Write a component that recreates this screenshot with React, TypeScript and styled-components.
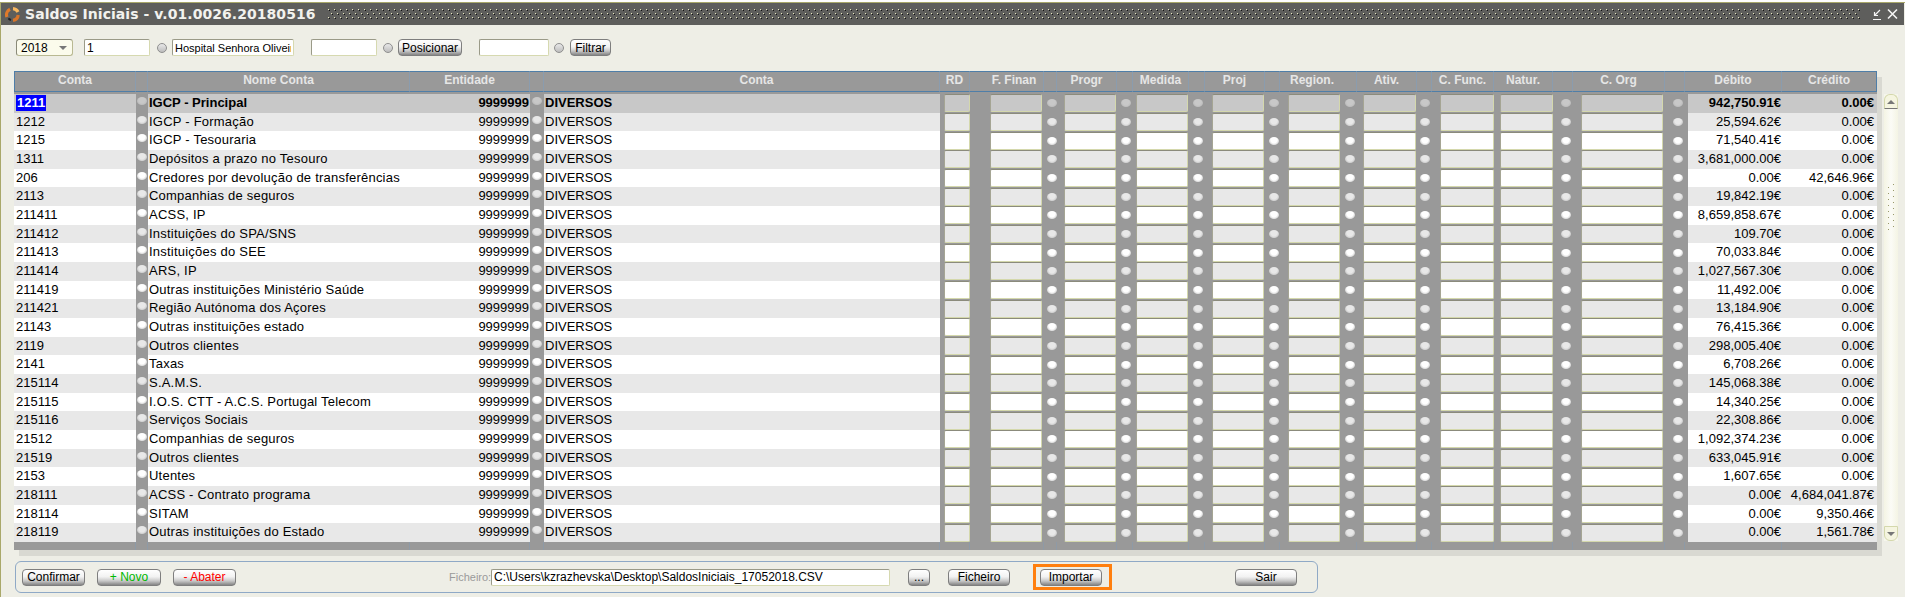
import React from 'react';
import styled, { createGlobalStyle } from 'styled-components';

const GlobalStyle = createGlobalStyle`
  html, body {
    margin: 0;
    padding: 0;
    background: #fff;
    overflow: hidden;
  }
  * {
    box-sizing: border-box;
  }
`;

const rows = [
  ['1211', 'IGCP - Principal', '942,750.91€', '0.00€'],
  ['1212', 'IGCP - Formação', '25,594.62€', '0.00€'],
  ['1215', 'IGCP - Tesouraria', '71,540.41€', '0.00€'],
  ['1311', 'Depósitos a prazo no Tesouro', '3,681,000.00€', '0.00€'],
  ['206', 'Credores por devolução de transferências', '0.00€', '42,646.96€'],
  ['2113', 'Companhias de seguros', '19,842.19€', '0.00€'],
  ['211411', 'ACSS, IP', '8,659,858.67€', '0.00€'],
  ['211412', 'Instituições do SPA/SNS', '109.70€', '0.00€'],
  ['211413', 'Instituições do SEE', '70,033.84€', '0.00€'],
  ['211414', 'ARS, IP', '1,027,567.30€', '0.00€'],
  ['211419', 'Outras instituições Ministério Saúde', '11,492.00€', '0.00€'],
  ['211421', 'Região Autónoma dos Açores', '13,184.90€', '0.00€'],
  ['21143', 'Outras instituições estado', '76,415.36€', '0.00€'],
  ['2119', 'Outros clientes', '298,005.40€', '0.00€'],
  ['2141', 'Taxas', '6,708.26€', '0.00€'],
  ['215114', 'S.A.M.S.', '145,068.38€', '0.00€'],
  ['215115', 'I.O.S. CTT - A.C.S. Portugal Telecom', '14,340.25€', '0.00€'],
  ['215116', 'Serviços Sociais', '22,308.86€', '0.00€'],
  ['21512', 'Companhias de seguros', '1,092,374.23€', '0.00€'],
  ['21519', 'Outros clientes', '633,045.91€', '0.00€'],
  ['2153', 'Utentes', '1,607.65€', '0.00€'],
  ['218111', 'ACSS - Contrato programa', '0.00€', '4,684,041.87€'],
  ['218114', 'SITAM', '0.00€', '9,350.46€'],
  ['218119', 'Outras instituições do Estado', '0.00€', '1,561.78€'],
];

// label, width, extra padding left / right to push the label over its input
const columns: [string, number, number?, number?][] = [
  ['Conta', 122],
  ['', 12],
  ['Nome Conta', 262],
  ['Entidade', 120],
  ['', 14],
  ['Conta', 396, 30],
  ['RD', 30],
  ['F. Finan', 74, 15],
  ['', 13],
  ['Progr', 60],
  ['', 16],
  ['Medida', 56],
  ['', 16],
  ['Proj', 60],
  ['', 15],
  ['Region.', 77, 0, 12],
  ['Ativ.', 60],
  ['', 15],
  ['C. Func.', 62],
  ['Natur.', 59],
  ['', 20],
  ['C. Org', 92],
  ['', 20],
  ['Débito', 97],
  ['Crédito', 95],
];

const headerTracks = columns.map((c) => `${c[1]}px`).join(' ');

// gap before the input, input width, gap before its dot
const fields: [number, number, number?][] = [
  [4, 26],
  [20, 52, 5],
  [7, 52, 5],
  [5, 52, 5],
  [9, 52, 5],
  [9, 52, 5],
  [8, 53, 4],
  [10, 54],
  [6, 53, 8],
  [10, 82, 10],
];

const tones = { selected: '#c8c8c8', alt: '#e8e8e8', plain: '#ffffff' };

const Window = styled.div`
  width: 1905px;
  height: 595px;
  margin-top: 2px;
  background: #eeeee6;
  border-top: 1px solid #a9a86a;
  border-left: 1px solid #a9a86a;
  font-family: 'Liberation Sans', Arial, sans-serif;
  font-size: 12px;
  color: #000;
`;

const TitleBar = styled.div`
  height: 22px;
  width: 1903px;
  background: #5e5e5c;
  display: flex;
  align-items: center;
  padding-left: 4px;
`;

const Title = styled.div`
  font-family: 'DejaVu Sans', Verdana, sans-serif;
  font-weight: bold;
  font-size: 14px;
  letter-spacing: 0.05px;
  color: #f2f2ee;
  margin-left: 5px;
  white-space: nowrap;
`;

const Grip = styled.svg`
  flex: 1;
  height: 12px;
  margin: 0 11px;
  display: block;
`;

const WindowIcons = styled.svg`
  display: block;
  margin-right: 3px;
`;

const Main = styled.div`
  padding-left: 13px;
`;

const Toolbar = styled.div`
  display: flex;
  align-items: center;
  height: 17px;
  margin-top: 14px;
`;

const SelectBox = styled.div<{ $left?: number; $width: number }>`
  width: ${(p) => p.$width}px;
  height: 17px;
  margin-left: ${(p) => p.$left || 0}px;
  padding-left: 4px;
  display: flex;
  align-items: center;
  justify-content: space-between;
  background: #fbfbec;
  border: 1px solid #b9b992;
  border-top-color: #8a8a78;
  border-left-color: #8a8a78;
  border-radius: 3px;
  font-size: 12px;

  &::after {
    content: '';
    margin-right: 5px;
    border-left: 4px solid transparent;
    border-right: 4px solid transparent;
    border-top: 4px solid #777;
  }
`;

const TextBox = styled.input<{ $left?: number; $width: number; $small?: boolean }>`
  width: ${(p) => p.$width}px;
  height: 17px;
  margin-left: ${(p) => p.$left || 0}px;
  padding: 0 2px;
  background: #fff;
  border: 1px solid #d6d9b0;
  border-top-color: #9a9a88;
  border-left-color: #9a9a88;
  border-radius: 2px;
  font-family: inherit;
  font-size: ${(p) => (p.$small ? 11 : 12)}px;
  color: #000;
  outline: none;
`;

const Radio = styled.span<{ $left?: number }>`
  display: block;
  width: 10px;
  height: 10px;
  margin-left: ${(p) => p.$left || 0}px;
  border-radius: 50%;
  border: 1px solid #8e8e8e;
  background: linear-gradient(#e8e8e8, #bdbdbd);
`;

const Button = styled.button<{ $left?: number; $width: number; $color?: string }>`
  width: ${(p) => p.$width}px;
  height: 17px;
  margin-left: ${(p) => p.$left || 0}px;
  padding: 0;
  background: linear-gradient(#ffffff 0%, #f2f2f2 45%, #c9c9c9 72%, #858585 100%);
  border: 1px solid #7e7e7e;
  border-radius: 4px;
  font-family: inherit;
  font-size: 12px;
  line-height: 14px;
  color: ${(p) => p.$color || '#000'};
`;

const TableArea = styled.div`
  display: flex;
  margin-top: 15px;
`;

const Table = styled.div`
  width: 1863px;
  background: #999;
  box-shadow: 5px 6px 0 #d9d9d2;
`;

const HeaderRow = styled.div`
  display: grid;
  grid-template-columns: ${headerTracks};
  height: 23px;
  border-bottom: 2px solid #999;
`;

const HeaderCell = styled.div<{ $left?: number; $right?: number }>`
  height: 21px;
  line-height: 17px;
  padding-left: ${(p) => p.$left || 0}px;
  padding-right: ${(p) => p.$right || 0}px;
  text-align: center;
  font-weight: bold;
  font-size: 12px;
  color: #e6e6e6;
  border-top: 1px solid #4f7ea8;
  border-bottom: 1px solid #4f7ea8;
  border-right: 1px solid #8a9cae;

  &:first-child {
    border-left: 1px solid #4f7ea8;
  }

  &:last-child {
    border-right: 1px solid #4f7ea8;
  }
`;

const FooterRow = styled.div`
  display: grid;
  grid-template-columns: ${headerTracks};
  height: 8px;
`;

const FooterCell = styled.div`
  border-right: 1px solid #8e9aa6;

  &:last-child {
    border-right: none;
  }
`;

const Body = styled.div`
  height: 448px;
  display: grid;
  grid-template-rows: repeat(24, 1fr);
`;

const Row = styled.div<{ $tone: string; $bold: boolean }>`
  display: grid;
  grid-template-columns: 122px 12px 262px 120px 14px 396px 748px 94px 93px;
  min-height: 0;
  background: ${(p) => p.$tone};
  font-weight: ${(p) => (p.$bold ? 'bold' : 'normal')};
  font-size: 13px;
  line-height: 18px;
  white-space: nowrap;
`;

const Cell = styled.div<{ $align?: string }>`
  text-align: ${(p) => p.$align || 'left'};
  padding: 0 1px;
  overflow: hidden;
`;

const CodeCell = styled(Cell)`
  padding-left: 2px;
`;

const NameCell = styled(Cell)<{ $bold: boolean }>`
  letter-spacing: ${(p) => (p.$bold ? 0 : 0.22)}px;
`;

const Selected = styled.span`
  display: inline-block;
  background: #0000ff;
  color: #fff;
  padding: 0 1px;
  line-height: 16px;
`;

const DotCell = styled.div`
  background: #999;
  display: flex;
  justify-content: center;
  padding-top: 3px;
`;

const Dot = styled.span<{ $tone: string; $left?: number }>`
  display: block;
  flex: none;
  width: 10px;
  height: 8px;
  margin-left: ${(p) => p.$left || 0}px;
  border-radius: 50%;
  background: radial-gradient(ellipse at 50% 30%, ${(p) => p.$tone} 45%, #b2b2b2 100%);
`;

const FieldsCell = styled.div`
  background: #999;
  display: flex;
  align-items: center;
`;

const FieldBox = styled.div<{ $tone: string; $left: number; $width: number }>`
  flex: none;
  height: 18px;
  width: ${(p) => p.$width}px;
  margin-left: ${(p) => p.$left}px;
  background: ${(p) => p.$tone};
  border: 1px solid #d4d8ac;
  border-top-color: #8b8b7c;
  border-left-color: #a5a594;
  border-radius: 2px;
`;

const ScrollBar = styled.div`
  width: 14px;
  height: 447px;
  margin-top: 23px;
  margin-left: 7px;
  display: flex;
  flex-direction: column;
  background: #f6f6ec;
`;

const ScrollButton = styled.div<{ $down?: boolean }>`
  height: 15px;
  display: flex;
  align-items: center;
  justify-content: center;
  background: #f5f5e0;
  border: 1px solid #d4d8ac;
  border-radius: ${(p) => (p.$down ? '0 0 6px 6px' : '6px 6px 0 0')};
  ${(p) => (p.$down ? '' : 'border-bottom: 1px solid #777;')}

  &::after {
    content: '';
    border-left: 4px solid transparent;
    border-right: 4px solid transparent;
    ${(p) => (p.$down ? 'border-top: 4px solid #777;' : 'border-bottom: 4px solid #777;')}
  }
`;

const ScrollTrack = styled.div`
  flex: 1;
  display: flex;
  justify-content: center;
  padding-top: 75px;
  background: linear-gradient(90deg, #f4f4e4, #fbfbf6 50%, #f4f4e4);
`;

const Panel = styled.div`
  width: 1303px;
  height: 32px;
  margin-top: 11px;
  margin-left: 1px;
  padding-left: 6px;
  display: flex;
  align-items: center;
  border: 1px solid #8fa9c6;
  border-radius: 6px;
`;

const FileLabel = styled.span`
  width: 39px;
  margin-left: 213px;
  margin-right: 3px;
  color: #9a9a9a;
  font-size: 11px;
  white-space: nowrap;
`;

const Highlight = styled.div`
  margin-left: 23px;
  height: 26px;
  padding: 0 7px 0 4px;
  display: flex;
  align-items: center;
  border: 3px solid #ff7f0e;
`;

const Logo = () => (
  <svg width="15" height="15" viewBox="0 0 15 15" fill="none">
    <path d="M2 10 A6 6 0 0 1 5 2.3" stroke="#e07a2a" strokeWidth="3.2" />
    <path d="M8 1.6 A6 6 0 0 1 13 5" stroke="#f8b860" strokeWidth="3.2" />
    <path d="M13.2 8 A6 6 0 0 1 8 13.3" stroke="#d8752a" strokeWidth="3.2" />
    <path d="M3.4 11.4 A6 6 0 0 0 6 13" stroke="#222" strokeWidth="2" />
  </svg>
);

const TitleGrip = () => (
  <Grip>
    <defs>
      <pattern id="title-grip" width="6" height="8" patternUnits="userSpaceOnUse">
        <rect x="1" y="1" width="1" height="1" fill="#e8e8c0" />
        <rect x="2" y="2" width="1" height="1" fill="#111" />
        <rect x="4" y="5" width="1" height="1" fill="#e8e8c0" />
        <rect x="5" y="6" width="1" height="1" fill="#111" />
      </pattern>
    </defs>
    <rect width="100%" height="100%" fill="url(#title-grip)" />
  </Grip>
);

const ScrollGrip = () => (
  <svg width="8" height="50" viewBox="0 0 8 50">
    {[0, 1, 2, 3, 4, 5, 6, 7].flatMap((i) => [
      <rect key={`a${i}`} x="1" y={i * 6 + 3} width="1" height="1" fill="#99996a" />,
      <rect key={`b${i}`} x="6" y={i * 6} width="1" height="1" fill="#99996a" />,
    ])}
  </svg>
);

export default function App() {
  return (
    <Window>
      <GlobalStyle />
      <TitleBar>
        <Logo />
        <Title>Saldos Iniciais - v.01.0026.20180516</Title>
        <TitleGrip />
        <WindowIcons width="30" height="14" viewBox="0 0 30 14" fill="none" stroke="#f4f4f4">
          <path d="M2 12.5 H10 M9 3 L3.5 8.5 M3.5 5 V8.5 H7" strokeWidth="1.2" />
          <path d="M17 2.5 L26 11.5 M26 2.5 L17 11.5" strokeWidth="1.6" />
        </WindowIcons>
      </TitleBar>
      <Main>
        <Toolbar>
          <SelectBox $left={2} $width={57}>2018</SelectBox>
          <TextBox $left={11} $width={66} value="1" readOnly />
          <Radio $left={7} />
          <TextBox $left={5} $width={122} $small value="Hospital Senhora Oliveira" readOnly />
          <TextBox $left={17} $width={66} value="" readOnly />
          <Radio $left={6} />
          <Button $left={5} $width={64}>Posicionar</Button>
          <TextBox $left={17} $width={70} value="" readOnly />
          <Radio $left={5} />
          <Button $left={6} $width={41}>Filtrar</Button>
        </Toolbar>
        <TableArea>
          <Table>
            <HeaderRow>
              {columns.map(([label, , left, right], i) => (
                <HeaderCell key={i} $left={left} $right={right}>{label}</HeaderCell>
              ))}
            </HeaderRow>
            <Body>
              {rows.map(([code, name, debit, credit], i) => {
                const tone = i === 0 ? tones.selected : i % 2 ? tones.alt : tones.plain;
                return (
                  <Row key={code} $tone={tone} $bold={i === 0}>
                    <CodeCell>{i === 0 ? <Selected>{code}</Selected> : code}</CodeCell>
                    <DotCell><Dot $tone={tone} /></DotCell>
                    <NameCell $bold={i === 0}>{name}</NameCell>
                    <Cell $align="right">9999999</Cell>
                    <DotCell><Dot $tone={tone} /></DotCell>
                    <Cell>DIVERSOS</Cell>
                    <FieldsCell>
                      {fields.map(([left, width, dot], f) => (
                        <React.Fragment key={f}>
                          <FieldBox $tone={tone} $left={left} $width={width} />
                          {dot !== undefined && <Dot $tone={tone} $left={dot} />}
                        </React.Fragment>
                      ))}
                    </FieldsCell>
                    <Cell $align="right">{debit}</Cell>
                    <Cell $align="right">{credit}</Cell>
                  </Row>
                );
              })}
            </Body>
            <FooterRow>
              {columns.map((_, i) => (
                <FooterCell key={i} />
              ))}
            </FooterRow>
          </Table>
          <ScrollBar>
            <ScrollButton />
            <ScrollTrack><ScrollGrip /></ScrollTrack>
            <ScrollButton $down />
          </ScrollBar>
        </TableArea>
        <Panel>
          <Button $width={63}>Confirmar</Button>
          <Button $left={12} $width={64} $color="#00b800">+ Novo</Button>
          <Button $left={12} $width={63} $color="#ff0000">- Abater</Button>
          <FileLabel>Ficheiro:</FileLabel>
          <TextBox $width={399} value="C:\Users\kzrazhevska\Desktop\SaldosIniciais_17052018.CSV" readOnly />
          <Button $left={18} $width={22}>...</Button>
          <Button $left={18} $width={62}>Ficheiro</Button>
          <Highlight>
            <Button $width={62}>Importar</Button>
          </Highlight>
          <Button $left={123} $width={62}>Sair</Button>
        </Panel>
      </Main>
    </Window>
  );
}
